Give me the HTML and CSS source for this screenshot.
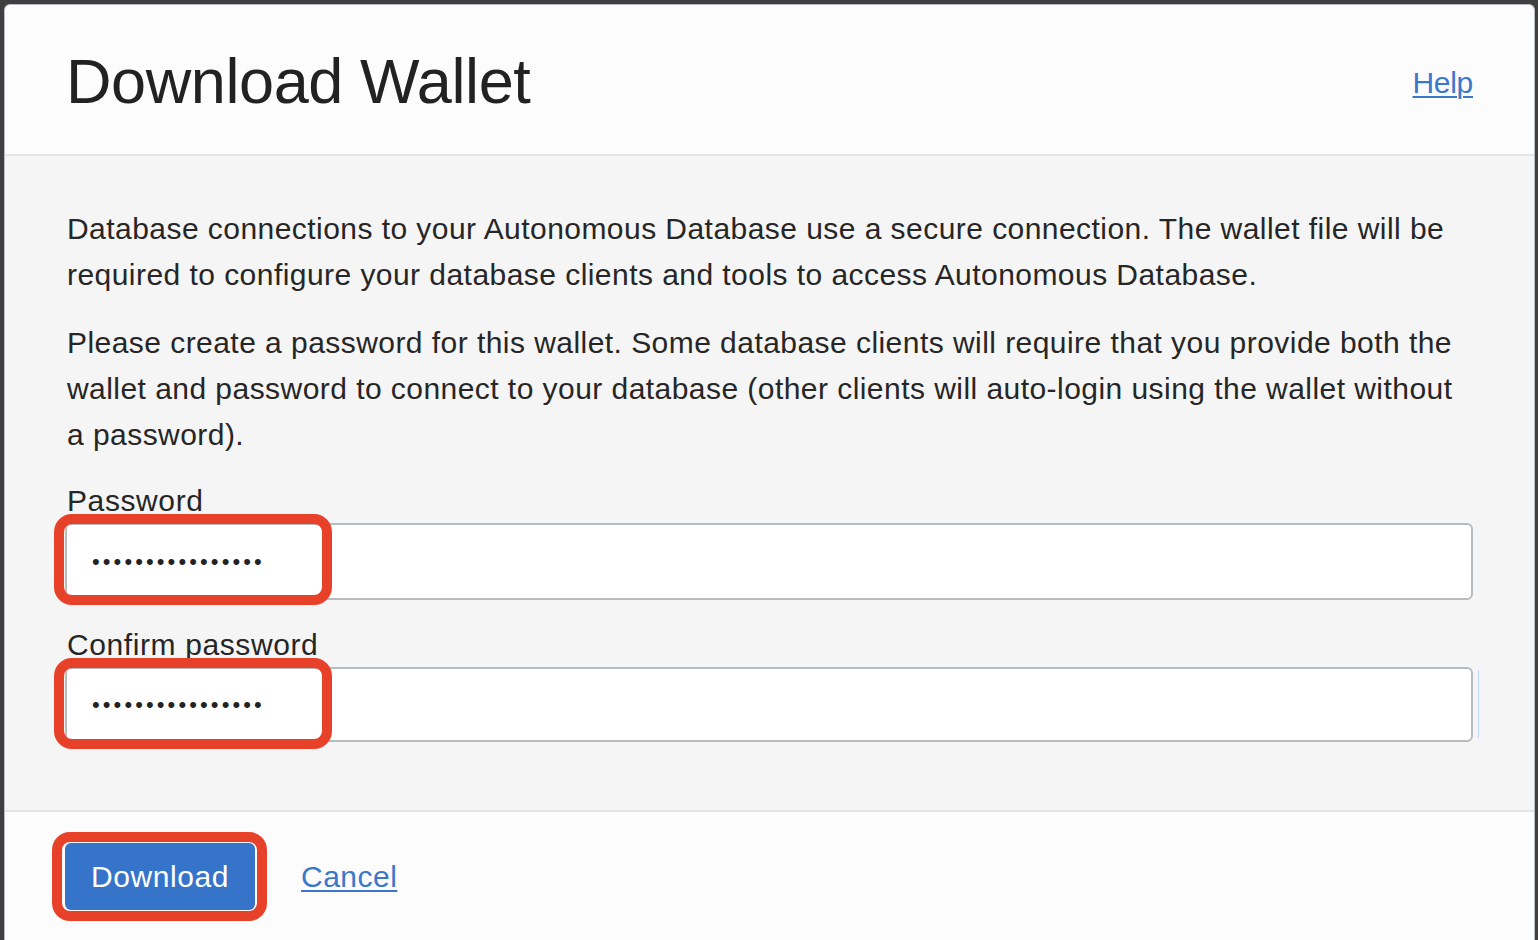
FILE: index.html
```html
<!DOCTYPE html>
<html lang="en">
<head>
<meta charset="utf-8">
<title>Download Wallet</title>
<link rel="stylesheet" href="styles.css">
</head>
<body>
<div class="dialog">
  <header class="dlg-header">
    <h1 class="dlg-title">Download Wallet</h1>
    <a class="help-link" href="#">Help</a>
  </header>
  <section class="dlg-body">
    <p class="para">Database connections to your Autonomous Database use a secure connection. The wallet file will be required to configure your database clients and tools to access Autonomous Database.</p>
    <p class="para">Please create a password for this wallet. Some database clients will require that you provide both the wallet and password to connect to your database (other clients will auto-login using the wallet without a password).</p>
    <div class="field">
      <label class="field-label">Password</label>
      <div class="input-wrap">
        <div class="input">••••••••••••••••</div>
        <span class="mark mark-input"></span>
      </div>
    </div>
    <div class="field field-second">
      <label class="field-label">Confirm password</label>
      <div class="input-wrap">
        <div class="input input-short">••••••••••••••••</div>
        <span class="mark mark-input"></span>
        <span class="focus-line"></span>
      </div>
    </div>
  </section>
  <footer class="dlg-footer">
    <div class="btn-wrap">
      <button class="btn-primary">Download</button>
      <span class="mark mark-btn"></span>
    </div>
    <a class="cancel-link" href="#">Cancel</a>
  </footer>
</div>
</body>
</html>
```
FILE: styles.css
```css
html, body {
  margin: 0;
  padding: 0;
}
body {
  background: #3f3f3f;
  height: 940px;
  overflow: hidden;
  font-family: "Liberation Sans", Arial, sans-serif;
  color: #262626;
}
.dialog {
  margin: 4px 3px 0 4px;
  border: 1px solid #b9bdc3;
  border-bottom: none;
  border-radius: 6px 6px 0 0;
  background: #fcfcfc;
  height: 960px;
  overflow: hidden;
}
.dlg-header {
  display: flex;
  justify-content: space-between;
  align-items: center;
  height: 151px;
  padding: 0 61px 0 61px;
  border-bottom: 2px solid #e5e5e5;
  box-sizing: border-box;
}
.dlg-title {
  margin: 0;
  font-size: 63px;
  font-weight: 400;
  color: #222;
  letter-spacing: -0.4px;
  padding-top: 2px;
}
.help-link {
  font-size: 30px;
  color: #3b78cc;
  text-decoration: underline;
  text-decoration-thickness: 2px;
  text-underline-offset: 3px;
  letter-spacing: -0.3px;
  padding-top: 6px;
}
.dlg-body {
  background: #f5f5f5;
  padding: 50px 61px 68px 60px;
}
.para {
  margin: 0 0 22px;
  font-size: 30px;
  letter-spacing: 0.45px;
  line-height: 46px;
  padding-left: 2px;
}
.field {
  padding-top: 4px;
}
.field-second {
  padding-top: 0;
  margin-top: 28px;
}
.field-label {
  display: block;
  font-size: 30px;
  letter-spacing: 0.6px;
  line-height: 34px;
  padding-left: 2px;
  margin-bottom: 5px;
}
.input-wrap {
  position: relative;
}
.input {
  height: 77px;
  box-sizing: border-box;
  border: 2px solid #b8bcc1;
  border-radius: 6px;
  background: #fff;
  padding-left: 25px;
  font-size: 22px;
  line-height: 73px;
  letter-spacing: 3.1px;
  color: #222;
}
.input-short {
  height: 75px;
  line-height: 71px;
}
.focus-line {
  position: absolute;
  right: -6px;
  top: 3px;
  width: 1px;
  height: 68px;
  background: #c4d6f5;
}
.mark {
  position: absolute;
  border: 10px solid #e8412a;
  border-radius: 18px;
  box-sizing: border-box;
  pointer-events: none;
}
.mark-input {
  left: -11px;
  top: -9px;
  width: 278px;
  height: 91px;
}
.dlg-footer {
  border-top: 2px solid #e5e5e5;
  background: #fcfcfc;
  padding: 31px 60px 0 60px;
  display: flex;
  align-items: center;
  gap: 46px;
}
.btn-wrap {
  position: relative;
}
.btn-primary {
  display: block;
  width: 190px;
  height: 67px;
  border: none;
  border-radius: 6px;
  background: #3574c9;
  color: #fff;
  font-family: "Liberation Sans", Arial, sans-serif;
  font-size: 30px;
  letter-spacing: 0.6px;
  padding: 0;
}
.mark-btn {
  left: -13px;
  top: -11px;
  width: 215px;
  height: 89px;
}
.cancel-link {
  font-size: 30px;
  letter-spacing: 0.5px;
  color: #3b78cc;
  text-decoration: underline;
  text-decoration-thickness: 2px;
  text-underline-offset: 3px;
}
```
